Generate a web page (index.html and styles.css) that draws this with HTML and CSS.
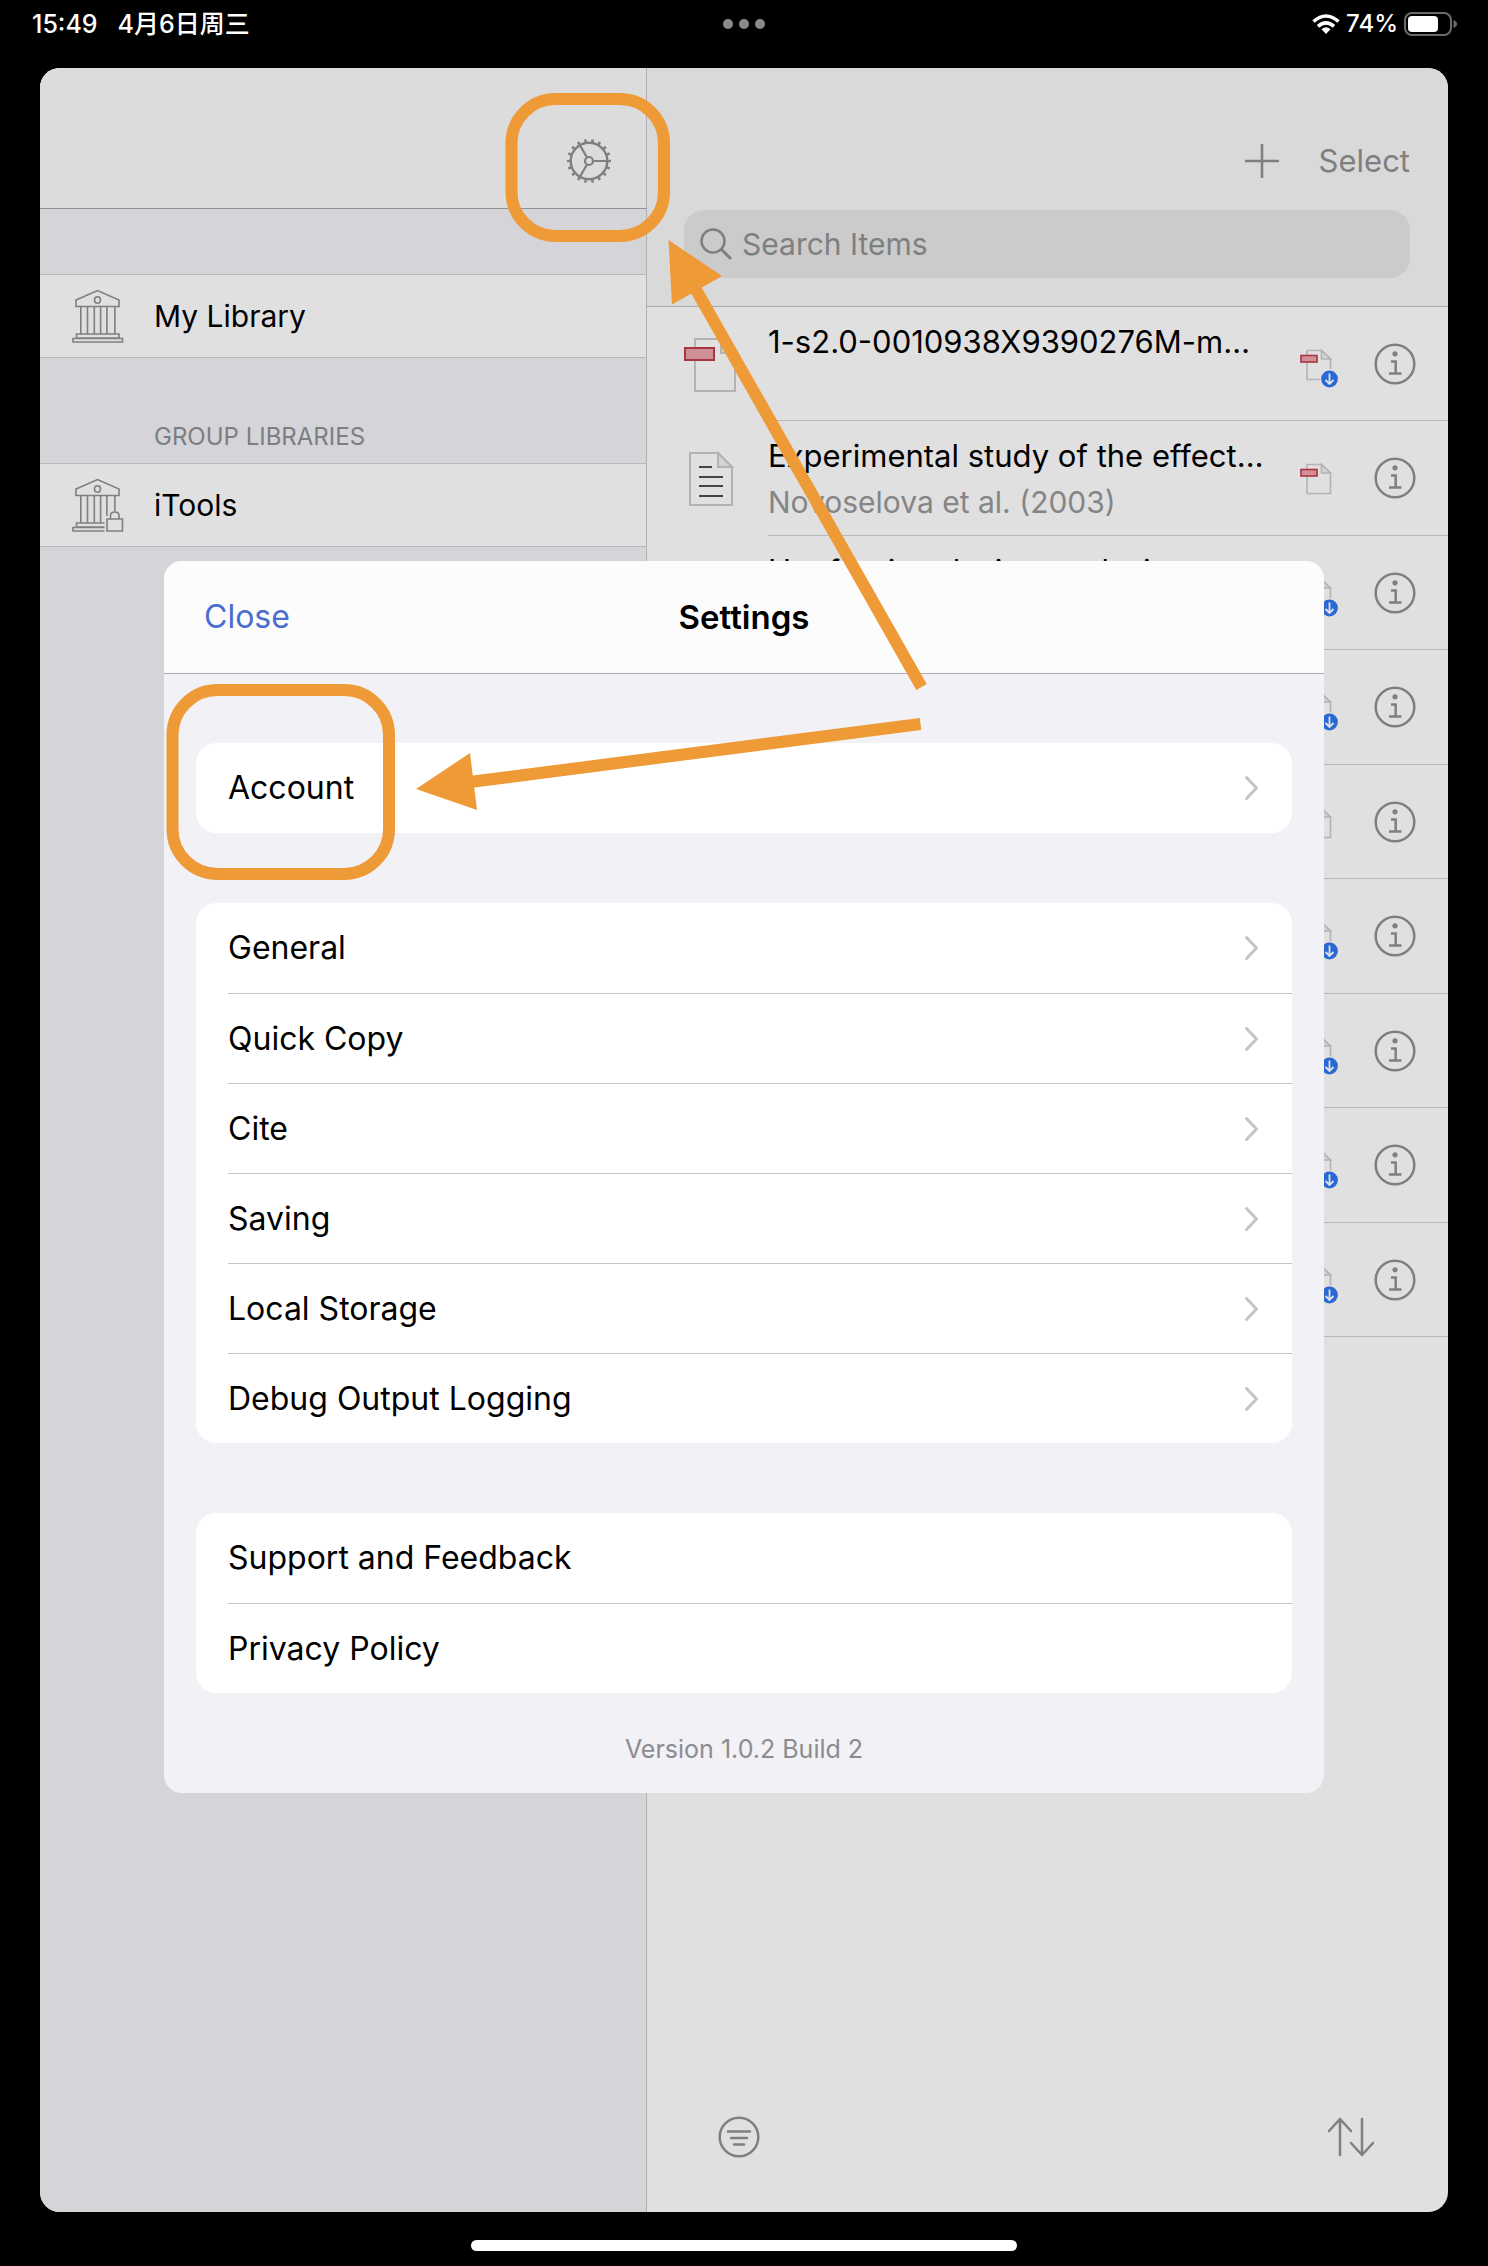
FILE: index.html
```html
<!DOCTYPE html>
<html lang="en">
<head>
<meta charset="utf-8">
<meta name="viewport" content="width=device-width, initial-scale=1">
<title>Settings</title>
<link rel="stylesheet" href="styles.css">
</head>
<body>
<svg class="defs" aria-hidden="true">
  <symbol id="bank" viewBox="0 0 52 54">
    <path d="M4 11 25.500 1.500 47 11V17.500H4ZM8.800 17.500V45M15.500 17.500V45M22.300 17.500V45M28.600 17.500V45M34.900 17.500V45M42.900 17.500V45M4.500 45H47V49H4.500ZM1 49.500H50.500V53H1Z"/>
    <ellipse cx="25.500" cy="11" rx="3" ry="3.300"/>
  </symbol>
  <symbol id="info" viewBox="0 0 42 42">
    <circle cx="21" cy="21" r="19.300" fill="none" stroke="currentColor" stroke-width="2.500"/>
    <circle cx="21" cy="10.800" r="2.600" fill="currentColor"/>
    <path d="M17 18.500H21.700V30.500M15 30.500H27.500" fill="none" stroke="currentColor" stroke-width="2.500"/>
  </symbol>
  <symbol id="pdf" viewBox="0 -4 40 48">
    <path d="M7 6.500H21.500L30.500 15V35.500H7Z" fill="none" stroke="#b3b3b3" stroke-width="1.600"/>
    <path d="M21.500 6.500V15H30.500Z" fill="#d3d3d3" stroke="#b3b3b3" stroke-width="1.600"/>
    <rect x="1" y="11.500" width="16" height="6.500" fill="#d28f96" stroke="#a93442" stroke-width="1.600"/>
  </symbol>
  <symbol id="pdf-download" viewBox="0 -4 40 48">
    <use href="#pdf" y="-4" width="40" height="48"/>
    <circle cx="29.500" cy="35" r="10" fill="#e0e0e0"/>
    <circle cx="29.500" cy="35" r="8.400" fill="#2a68d4"/>
    <path d="M29.500 29.500V40M25.500 36 29.500 40 33.500 36" fill="none" stroke="#e0e0e0" stroke-width="1.800"/>
  </symbol>
  <symbol id="chevron" viewBox="0 0 16 26">
    <path d="M2.500 2.500 12.500 13 2.500 23.500" fill="none" stroke="#c4c4c6" stroke-width="3" stroke-linecap="round" stroke-linejoin="round"/>
  </symbol>
</svg>

<div class="screen">
  <header class="status">
    <div class="status-left"><span>15:49</span><span>4月6日周三</span></div>
    <div class="status-dots"><i></i><i></i><i></i></div>
    <div class="status-right">
      <svg width="28" height="20" viewBox="0 0 28 20" aria-label="Wi-Fi"><g fill="none" stroke="#fff" stroke-width="3.600"><path d="M1.500 7.500Q14-3.500 26.500 7.500"/><path d="M6 12.300Q14 5.300 22 12.300"/></g><path d="M9.500 15.200Q14 11.200 18.500 15.200L14 20Z" fill="#fff"/></svg>
      <span>74%</span>
      <svg width="54" height="24" viewBox="0 0 54 24" aria-label="Battery"><rect x="1" y="1" width="46" height="22" rx="7" fill="none" stroke="#6b6b6b" stroke-width="2"/><rect x="4" y="4" width="30" height="16" rx="4" fill="#fff"/><path d="M49.500 8Q53 9.500 53 12T49.500 16Z" fill="#6b6b6b"/></svg>
    </div>
  </header>

  <main class="window">
    <aside class="sidebar">
      <div class="sidebar-head">
        <button class="icon-button" aria-label="Settings">
          <svg width="46" height="46" viewBox="-23 -23 46 46" fill="none" stroke="currentColor">
            <circle r="18.300" stroke-width="2.400"/>
            <circle r="20.500" stroke-width="3" pathLength="36" stroke-dasharray="0.7 1.3" stroke-dashoffset="0.35"/>
            <circle r="4" stroke-width="2.200"/>
            <path d="M4 0H18M-2 -3.500-9 -15.600M-2 3.500-9 15.600" stroke-width="2.200"/>
          </svg>
        </button>
      </div>
      <div class="sidebar-gap"></div>
      <a class="library" href="#my-library">
        <svg class="library-icon" width="52" height="54"><use href="#bank"/></svg>
        <span>My Library</span>
      </a>
      <h2 class="group-title">GROUP LIBRARIES</h2>
      <a class="library" href="#itools">
        <svg class="library-icon" width="52" height="54" viewBox="0 0 52 54">
          <use href="#bank"/>
          <path d="M32.500 38H36V33H49V38H52V54H32.500Z" fill="#e0e0e0" stroke="none"/>
          <path d="M35 41H50.500V53H35ZM38.500 41V37.500Q38.500 34 42.800 34T47 37.500V41"/>
        </svg>
        <span>iTools</span>
      </a>
    </aside>

    <section class="items">
      <div class="items-head">
        <div class="toolbar">
          <button class="icon-button" aria-label="Add"><svg width="34" height="34" viewBox="0 0 34 34"><path d="M17 1V33M1 17H33" fill="none" stroke="currentColor" stroke-width="2.600" stroke-linecap="round"/></svg></button>
          <button class="text-button">Select</button>
        </div>
        <label class="search">
          <svg width="32" height="32" viewBox="0 0 32 32" aria-hidden="true"><circle cx="13" cy="13" r="11.500" fill="none" stroke="currentColor" stroke-width="2.500"/><path d="M21.500 21.500 30 30" stroke="currentColor" stroke-width="3" stroke-linecap="round"/></svg>
          <input type="search" placeholder="Search Items" aria-label="Search Items">
        </label>
      </div>

      <ul class="list">
        <li class="item">
          <svg class="item-icon" width="52" height="56" viewBox="0 0 52 56"><path d="M11 2H37L51 16V54H11Z" fill="none" stroke="#b3b3b3" stroke-width="2"/><path d="M37 2V16H51Z" fill="#d3d3d3" stroke="#b3b3b3" stroke-width="2"/><rect x="1" y="11" width="29" height="12" fill="#cd9094" stroke="#a93442" stroke-width="2"/></svg>
          <div class="item-main"><div class="item-text"><p class="item-title">1-s2.0-0010938X9390276M-m…</p></div>
            <svg width="40" height="48"><use href="#pdf-download"/></svg><button class="icon-button" aria-label="Info"><svg width="42" height="42"><use href="#info"/></svg></button></div>
        </li>
        <li class="item">
          <svg class="item-icon" width="52" height="56" viewBox="0 0 52 56"><path d="M6 2H34L48 16V54H6Z" fill="none" stroke="#b3b3b3" stroke-width="2"/><path d="M34 2V16H48Z" fill="#d3d3d3" stroke="#b3b3b3" stroke-width="2"/><path d="M15 16H28M15 26H39M15 35H39M15 45H39" stroke="#444" stroke-width="2.200"/></svg>
          <div class="item-main"><div class="item-text"><p class="item-title">Experimental study of the effect…</p><p class="item-creator">Novoselova et al. (2003)</p></div>
            <svg width="40" height="48"><use href="#pdf"/></svg><button class="icon-button" aria-label="Info"><svg width="42" height="42"><use href="#info"/></svg></button></div>
        </li>
        <li class="item">
          <span class="item-icon"></span>
          <div class="item-main"><div class="item-text"><p class="item-title">Hot forging design analysis syst…</p></div>
            <svg width="40" height="48"><use href="#pdf-download"/></svg><button class="icon-button" aria-label="Info"><svg width="42" height="42"><use href="#info"/></svg></button></div>
        </li>
        <li class="item">
          <span class="item-icon"></span>
          <div class="item-main"><div class="item-text"></div>
            <svg width="40" height="48"><use href="#pdf-download"/></svg><button class="icon-button" aria-label="Info"><svg width="42" height="42"><use href="#info"/></svg></button></div>
        </li>
        <li class="item">
          <span class="item-icon"></span>
          <div class="item-main"><div class="item-text"></div>
            <svg width="40" height="48"><use href="#pdf"/></svg><button class="icon-button" aria-label="Info"><svg width="42" height="42"><use href="#info"/></svg></button></div>
        </li>
        <li class="item">
          <span class="item-icon"></span>
          <div class="item-main"><div class="item-text"></div>
            <svg width="40" height="48"><use href="#pdf-download"/></svg><button class="icon-button" aria-label="Info"><svg width="42" height="42"><use href="#info"/></svg></button></div>
        </li>
        <li class="item">
          <span class="item-icon"></span>
          <div class="item-main"><div class="item-text"></div>
            <svg width="40" height="48"><use href="#pdf-download"/></svg><button class="icon-button" aria-label="Info"><svg width="42" height="42"><use href="#info"/></svg></button></div>
        </li>
        <li class="item">
          <span class="item-icon"></span>
          <div class="item-main"><div class="item-text"></div>
            <svg width="40" height="48"><use href="#pdf-download"/></svg><button class="icon-button" aria-label="Info"><svg width="42" height="42"><use href="#info"/></svg></button></div>
        </li>
        <li class="item">
          <span class="item-icon"></span>
          <div class="item-main"><div class="item-text"></div>
            <svg width="40" height="48"><use href="#pdf-download"/></svg><button class="icon-button" aria-label="Info"><svg width="42" height="42"><use href="#info"/></svg></button></div>
        </li>
      </ul>

      <div class="items-foot">
        <button class="icon-button" aria-label="Filter"><svg width="42" height="42" viewBox="0 0 42 42" fill="none" stroke="currentColor" stroke-width="2.500" stroke-linecap="round"><circle cx="21" cy="21" r="19.300"/><path d="M10 15.500H32M13 22H29M16 28.500H26"/></svg></button>
        <button class="icon-button" aria-label="Sort"><svg width="48" height="42" viewBox="0 0 48 42" fill="none" stroke="currentColor" stroke-width="2.500" stroke-linecap="round" stroke-linejoin="round"><path d="M13 39V3M2 15 13 3 24 15M35 3V39M24 27 35 39 46 27"/></svg></button>
      </div>
    </section>
  </main>

  <footer class="home"><span></span></footer>

  <section class="modal" role="dialog" aria-labelledby="settings-title">
    <div class="modal-head">
      <button class="close">Close</button>
      <h1 id="settings-title">Settings</h1>
    </div>
    <div class="modal-body">
      <div class="card">
        <button class="row"><span>Account</span><svg width="16" height="26"><use href="#chevron"/></svg></button>
      </div>
      <div class="card">
        <button class="row"><span>General</span><svg width="16" height="26"><use href="#chevron"/></svg></button>
        <button class="row"><span>Quick Copy</span><svg width="16" height="26"><use href="#chevron"/></svg></button>
        <button class="row"><span>Cite</span><svg width="16" height="26"><use href="#chevron"/></svg></button>
        <button class="row"><span>Saving</span><svg width="16" height="26"><use href="#chevron"/></svg></button>
        <button class="row"><span>Local Storage</span><svg width="16" height="26"><use href="#chevron"/></svg></button>
        <button class="row"><span>Debug Output Logging</span><svg width="16" height="26"><use href="#chevron"/></svg></button>
      </div>
      <div class="card">
        <a class="row" href="#support"><span>Support and Feedback</span></a>
        <a class="row" href="#privacy"><span>Privacy Policy</span></a>
      </div>
      <p class="version">Version 1.0.2 Build 2</p>
    </div>
  </section>

  <!-- Callouts: the gear button and the Account row -->
  <svg class="callouts" viewBox="0 0 1488 2266" preserveAspectRatio="xMidYMin meet" aria-hidden="true">
    <g fill="none" stroke="#ee9a36" stroke-width="12">
      <rect x="511.500" y="99" width="152.500" height="137" rx="44"/>
      <rect x="172.500" y="690" width="216.500" height="184" rx="45"/>
      <path d="M695 288 921.500 687M470 782 920.500 724"/>
    </g>
    <path d="M668.500 240 722 276 672 304.500ZM416 789 470 753 477 810Z" fill="#ee9a36"/>
  </svg>
</div>
</body>
</html>
```
FILE: styles.css
```css
* { box-sizing: border-box; }

body {
  margin: 0;
  background: #000;
  color: #000;
  font-family: Inter, "Noto Sans CJK SC", sans-serif;
  font-size: 32px;
  line-height: 46px;
}

h1, h2, p, ul { margin: 0; padding: 0; font-weight: 400; }
ul { list-style: none; }
svg { display: block; flex: none; }
a { color: inherit; text-decoration: none; }
button { padding: 0; border: 0; background: none; font: inherit; color: inherit; text-align: left; }

.defs { position: absolute; width: 0; height: 0; }

.screen {
  position: relative;
  display: flex;
  flex-direction: column;
  min-height: 100vh;
}

/* Status bar */
.status {
  display: grid;
  grid-template-columns: 1fr auto 1fr;
  align-items: center;
  height: 48px;
  margin-bottom: 20px;
  padding: 0 30px;
  color: #fff;
  font-size: 24px;
  font-weight: 500;
  line-height: 32px;
}
.status-left { display: flex; gap: 20px; padding-left: 2px; font-size: 25px; }
.status-dots { display: flex; gap: 6px; }
.status-dots i { width: 10px; height: 10px; border-radius: 50%; background: #8a8a8a; }
.status-right { display: flex; align-items: center; justify-content: flex-end; gap: 6px; }

/* App window */
.window {
  flex: 1;
  display: grid;
  grid-template-columns: 607px 1fr;
  margin: 0 40px;
  border-radius: 20px;
  overflow: hidden;
  background: #e0e0e0;
  font-size: 30px;
}

.icon-button { display: block; color: #7f7f7f; }

.sidebar { background: #d4d4d9; border-right: 1px solid #b0b0b3; }
.sidebar-head {
  display: flex;
  align-items: flex-start;
  justify-content: flex-end;
  height: 141px;
  padding: 70px 34px 0 0;
  background: #dcdcdc;
  border-bottom: 1px solid #939396;
}
.sidebar-gap { height: 65px; }
.library {
  display: flex;
  align-items: center;
  gap: 30px;
  height: 84px;
  padding-left: 32px;
  background: #e0e0e0;
  border: solid #b9b9bc;
  border-width: 1px 0;
}
.library-icon { fill: none; stroke: #7f7f7f; stroke-width: 1.6px; }
.group-title {
  height: 105px;
  padding: 63px 0 0 114px;
  color: #7d7d82;
  font-size: 24px;
  line-height: 32px;
}

.items { display: flex; flex-direction: column; min-width: 0; }
.items-head {
  padding: 71px 38px 28px 37px;
  background: #d9d9d9;
  border-bottom: 1px solid #aaaaaa;
}
.toolbar {
  display: flex;
  align-items: center;
  justify-content: flex-end;
  gap: 40px;
  height: 44px;
  margin-bottom: 27px;
  color: #7f7f7f;
}
.text-button { font-size: 31px; }
.search {
  display: flex;
  align-items: center;
  gap: 10px;
  height: 68px;
  padding: 0 16px;
  border-radius: 20px;
  background: #cbcbcb;
  color: #7f7f7f;
}
.search input {
  flex: 1;
  min-width: 0;
  padding: 0;
  border: 0;
  outline: 0;
  background: none;
  font: inherit;
  color: inherit;
}
.search input::placeholder { color: #7f7f7f; opacity: 1; }

.item { display: flex; height: 114px; }
.item:nth-child(even) { height: 115px; }
.item-icon { width: 52px; margin: 30px 32px 0 37px; flex: none; }
.item-main {
  flex: 1;
  display: flex;
  align-items: center;
  gap: 34px;
  min-width: 0;
  padding-right: 32px;
  border-bottom: 1px solid #b9b9b9;
}
.item-text { flex: 1; align-self: flex-start; min-width: 0; padding-top: 12px; white-space: nowrap; }
.item-title { font-size: 31px; }
.item-creator { color: #858585; }

.items-foot {
  display: flex;
  justify-content: space-between;
  margin-top: auto;
  padding: 0 73px 54px 71px;
}

.home { display: flex; justify-content: center; height: 54px; padding-top: 28px; }
.home span { width: 546px; height: 11px; border-radius: 6px; background: #fff; }

/* Settings dialog, floating over the window */
.modal {
  position: absolute;
  top: 561px;
  left: 164px;
  right: 164px;
  border-radius: 18px;
  overflow: hidden;
  background: #f1f1f6;
}
.modal-head {
  display: grid;
  grid-template-columns: 1fr auto 1fr;
  align-items: center;
  height: 113px;
  padding: 0 40px;
  background: #fcfcfc;
  border-bottom: 1px solid #adadb1;
}
.modal-head h1 { font-size: 33px; font-weight: 600; }
.close { color: #4a6dd0; }
.modal-body {
  display: flex;
  flex-direction: column;
  gap: 70px;
  padding: 69px 32px 28px;
}
.card { border-radius: 20px; background: #fff; padding-left: 32px; }
.row {
  display: flex;
  align-items: center;
  justify-content: space-between;
  width: 100%;
  height: 90px;
  padding-right: 32px;
}
.row + .row { border-top: 1px solid #c6c6c8; }
.version {
  margin-top: -30px;
  color: #8b8b90;
  font-size: 25px;
  line-height: 32px;
  text-align: center;
}

.callouts { position: absolute; top: 0; left: 0; width: 100%; pointer-events: none; }
```
